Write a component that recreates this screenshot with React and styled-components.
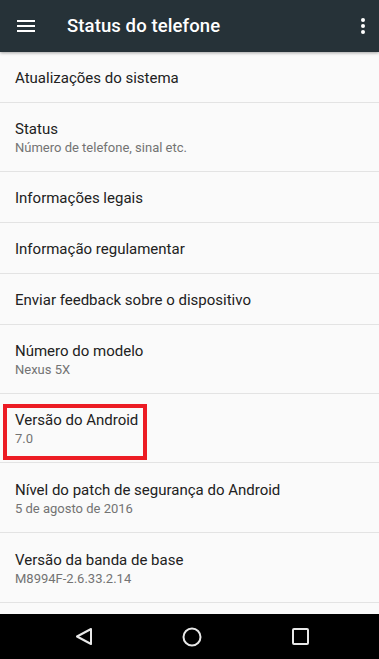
import React from "react";
import styled, { createGlobalStyle } from "styled-components";

const Global = createGlobalStyle`
  html, body { margin: 0; padding: 0; height: 100%; overflow: hidden; }
  body { font-family: Roboto, "Noto Sans", "Liberation Sans", sans-serif; background: #fafafa; }
  #root { height: 100%; }
`;

const Screen = styled.div`
  display: flex;
  flex-direction: column;
  height: 659px;
  width: 379px;
  background: #fafafa;
`;

const Toolbar = styled.header`
  flex: 0 0 52px;
  height: 52px;
  background: #263238;
  display: flex;
  align-items: center;
  box-shadow: 0 1px 3px rgba(0, 0, 0, 0.35);
  position: relative;
  z-index: 1;
`;

const IconButton = styled.div`
  width: ${(p) => p.$w}px;
  height: 52px;
  display: flex;
  align-items: center;
  justify-content: center;
  flex: 0 0 auto;
`;

const Title = styled.h1`
  margin: 0;
  flex: 1;
  color: #ffffff;
  font-size: 18.5px;
  font-weight: 500;
  letter-spacing: 0.1px;
  padding-left: 15px;
`;

const List = styled.div`
  flex: 1;
  overflow: hidden;
  display: flex;
  flex-direction: column;
`;

const Row = styled.div`
  position: relative;
  flex: 0 0 auto;
  box-sizing: border-box;
  height: ${(p) => p.$h}px;
  border-bottom: 1px solid #e3e3e3;
  padding: 2px 15px 0;
  display: flex;
  flex-direction: column;
  justify-content: center;
`;

const Primary = styled.div`
  font-size: 15px;
  line-height: 20px;
  color: #212121;
`;

const Secondary = styled.div`
  font-size: 13px;
  line-height: 18px;
  color: #737373;
`;

const Highlight = styled.div`
  position: absolute;
  left: 3px;
  top: 10px;
  width: 144px;
  height: 56px;
  box-sizing: border-box;
  border: 4px solid #ec1c24;
  pointer-events: none;
`;

const NavBar = styled.nav`
  flex: 0 0 45px;
  height: 45px;
  background: #000000;
  display: grid;
  grid-template-columns: repeat(3, 108px);
  align-items: center;
  justify-items: center;
  padding-left: 30px;
`;

const items = [
  { t: "Atualizações do sistema", h: 51 },
  { t: "Status", s: "Número de telefone, sinal etc.", h: 69 },
  { t: "Informações legais", h: 51 },
  { t: "Informação regulamentar", h: 51 },
  { t: "Enviar feedback sobre o dispositivo", h: 51 },
  { t: "Número do modelo", s: "Nexus 5X", h: 69 },
  { t: "Versão do Android", s: "7.0", h: 69, mark: true },
  { t: "Nível do patch de segurança do Android", s: "5 de agosto de 2016", h: 70 },
  { t: "Versão da banda de base", s: "M8994F-2.6.33.2.14", h: 70 },
  { t: "", h: 51 },
];

export default function App() {
  return (
    <>
      <Global />
      <Screen>
        <Toolbar>
          <IconButton $w={52}>
            <svg width="18" height="14" viewBox="0 0 18 14">
              <rect x="0" y="1" width="18" height="2" fill="#fff" />
              <rect x="0" y="6" width="18" height="2" fill="#fff" />
              <rect x="0" y="11" width="18" height="2" fill="#fff" />
            </svg>
          </IconButton>
          <Title>Status do telefone</Title>
          <IconButton $w={32}>
            <svg width="4" height="16" viewBox="0 0 4 16">
              <circle cx="2" cy="2" r="2" fill="#fff" />
              <circle cx="2" cy="8" r="2" fill="#fff" />
              <circle cx="2" cy="14" r="2" fill="#fff" />
            </svg>
          </IconButton>
        </Toolbar>
        <List>
          {items.map((it, i) => (
            <Row key={i} $h={it.h}>
              {it.t && <Primary>{it.t}</Primary>}
              {it.s && <Secondary>{it.s}</Secondary>}
              {it.mark && <Highlight />}
            </Row>
          ))}
        </List>
        <NavBar>
          <svg width="18" height="19" viewBox="0 0 18 19">
            <path d="M16 2 L2 9.5 L16 17 Z" fill="none" stroke="#e8e8e8" strokeWidth="2" strokeLinejoin="round" />
          </svg>
          <svg width="20" height="20" viewBox="0 0 20 20">
            <circle cx="10" cy="10" r="8.5" fill="none" stroke="#e8e8e8" strokeWidth="2" />
          </svg>
          <svg width="17" height="17" viewBox="0 0 17 17">
            <rect x="1" y="1" width="15" height="15" rx="1" fill="none" stroke="#e8e8e8" strokeWidth="2" />
          </svg>
        </NavBar>
      </Screen>
    </>
  );
}
